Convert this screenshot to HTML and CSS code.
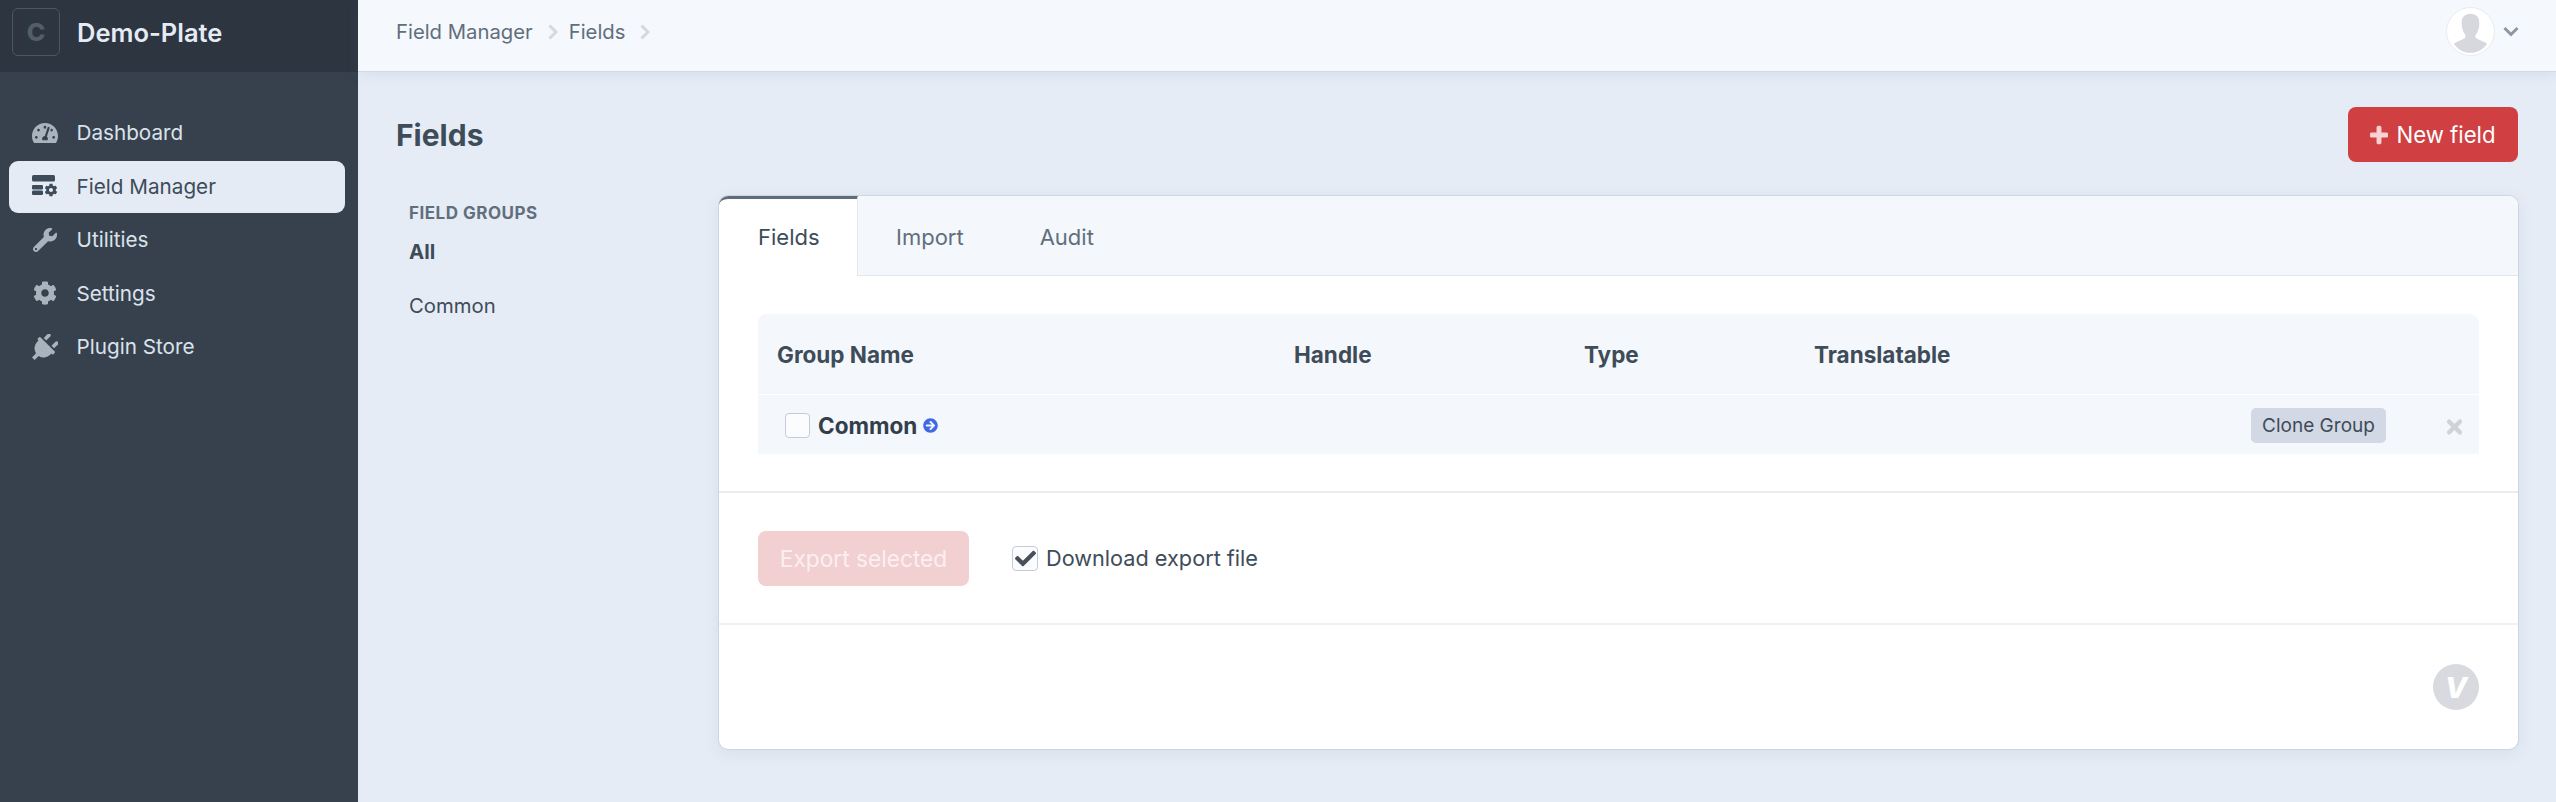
FILE: index.html
```html
<!DOCTYPE html>
<html lang="en">
<head>
    <meta charset="UTF-8">
    <title>Fields</title>
    <link rel="stylesheet" href="styles.css">
</head>
<body>
    <div class="app">
        <aside class="sidebar">
            <div class="brand">
                <span class="brand-logo">C</span>
                <span class="brand-name">Demo-Plate</span>
            </div>
            <ul class="nav">
                <li class="nav-item">
                    <svg class="nav-icon" viewBox="0 0 576 512"><path d="M288 32C128.94 32 0 160.94 0 320c0 52.8 14.25 102.26 39.06 144.8 5.61 9.62 16.3 15.2 27.44 15.2h443c11.14 0 21.83-5.58 27.44-15.2C561.75 422.26 576 372.8 576 320c0-159.06-128.94-288-288-288zm0 64c14.71 0 26.58 10.13 30.32 23.65-1.11 2.26-2.64 4.23-3.45 6.67l-9.22 27.67c-5.13 3.49-10.97 6.01-17.64 6.01-17.67 0-32-14.33-32-32S270.33 96 288 96zM96 384c-17.67 0-32-14.33-32-32s14.33-32 32-32 32 14.33 32 32-14.33 32-32 32zm48-160c-17.67 0-32-14.33-32-32s14.33-32 32-32 32 14.33 32 32-14.33 32-32 32zm246.77-72.41l-61.33 184C343.13 347.33 352 364.54 352 384c0 11.72-3.38 22.55-8.88 32H232.88c-5.5-9.45-8.88-20.28-8.88-32 0-33.94 26.5-61.43 59.9-63.59l61.34-184.01c4.17-12.56 17.73-19.45 30.36-15.17 12.57 4.19 19.35 17.79 15.17 30.36zm14.66 57.2l15.52-46.55c3.47-1.29 7.13-2.23 11.05-2.23 17.67 0 32 14.33 32 32s-14.33 32-32 32c-11.38-.01-20.89-6.28-26.57-15.22zM480 384c-17.67 0-32-14.33-32-32s14.33-32 32-32 32 14.33 32 32-14.33 32-32 32z"/></svg>
                    Dashboard
                </li>
                <li class="nav-item active">
                    <svg class="nav-icon" viewBox="0 0 26 24">
                        <rect x="0" y="0" width="23" height="6.500" rx="1.500"/>
                        <rect x="0" y="10" width="11" height="4.500" rx="1.200"/>
                        <rect x="0" y="15.500" width="11" height="4.500" rx="1.200"/>
                        <g transform="translate(12.500 8.500) scale(0.0254)"><path d="M487.4 315.7l-42.6-24.6c4.3-23.2 4.3-47 0-70.2l42.6-24.6c4.9-2.8 7.1-8.6 5.5-14-11.1-35.6-30-67.8-54.7-94.6-3.8-4.1-10-5.1-14.8-2.3L380.8 110c-17.9-15.4-38.5-27.3-60.8-35.1V25.8c0-5.6-3.9-10.5-9.4-11.7-36.7-8.2-74.3-7.8-109.2 0-5.5 1.2-9.4 6.1-9.4 11.7V75c-22.2 7.9-42.8 19.8-60.8 35.1L88.7 85.5c-4.9-2.8-11-1.9-14.8 2.3-24.7 26.7-43.6 58.9-54.7 94.6-1.7 5.4.6 11.2 5.5 14L67.3 221c-4.3 23.2-4.3 47 0 70.2l-42.6 24.6c-4.9 2.8-7.1 8.6-5.5 14 11.1 35.6 30 67.8 54.7 94.6 3.8 4.1 10 5.1 14.8 2.3l42.6-24.6c17.9 15.4 38.5 27.3 60.8 35.1v49.2c0 5.6 3.9 10.5 9.4 11.7 36.7 8.2 74.3 7.8 109.2 0 5.5-1.2 9.4-6.1 9.4-11.7v-49.2c22.2-7.9 42.8-19.8 60.8-35.1l42.6 24.6c4.9 2.8 11 1.9 14.8-2.3 24.7-26.7 43.6-58.9 54.7-94.6 1.5-5.5-.7-11.3-5.6-14.1zM256 336c-44.1 0-80-35.9-80-80s35.9-80 80-80 80 35.9 80 80-35.9 80-80 80z"/></g>
                    </svg>
                    Field Manager
                </li>
                <li class="nav-item">
                    <svg class="nav-icon" viewBox="0 0 512 512"><path d="M507.73 109.1c-2.24-9.03-13.54-12.09-20.12-5.51l-74.36 74.36-67.88-11.31-11.31-67.88 74.36-74.36c6.62-6.62 3.43-17.9-5.66-20.16-47.38-11.74-99.55.91-136.58 37.93-39.64 39.64-50.55 97.1-34.05 147.2L18.74 402.76c-24.99 24.99-24.99 65.51 0 90.5 24.99 24.99 65.51 24.99 90.5 0l213.21-213.21c50.12 16.71 107.47 5.68 147.37-34.22 37.07-37.07 49.7-89.32 37.91-136.73zM64 472c-13.25 0-24-10.75-24-24 0-13.26 10.75-24 24-24s24 10.74 24 24c0 13.25-10.75 24-24 24z"/></svg>
                    Utilities
                </li>
                <li class="nav-item">
                    <svg class="nav-icon" viewBox="0 0 512 512"><path d="M487.4 315.7l-42.6-24.6c4.3-23.2 4.3-47 0-70.2l42.6-24.6c4.9-2.8 7.1-8.6 5.5-14-11.1-35.6-30-67.8-54.7-94.6-3.8-4.1-10-5.1-14.8-2.3L380.8 110c-17.9-15.4-38.5-27.3-60.8-35.1V25.8c0-5.6-3.9-10.5-9.4-11.7-36.7-8.2-74.3-7.8-109.2 0-5.5 1.2-9.4 6.1-9.4 11.7V75c-22.2 7.9-42.8 19.8-60.8 35.1L88.7 85.5c-4.9-2.8-11-1.9-14.8 2.3-24.7 26.7-43.6 58.9-54.7 94.6-1.7 5.4.6 11.2 5.5 14L67.3 221c-4.3 23.2-4.3 47 0 70.2l-42.6 24.6c-4.9 2.8-7.1 8.6-5.5 14 11.1 35.6 30 67.8 54.7 94.6 3.8 4.1 10 5.1 14.8 2.3l42.6-24.6c17.9 15.4 38.5 27.3 60.8 35.1v49.2c0 5.6 3.9 10.5 9.4 11.7 36.7 8.2 74.3 7.8 109.2 0 5.5-1.2 9.4-6.1 9.4-11.7v-49.2c22.2-7.9 42.8-19.8 60.8-35.1l42.6 24.6c4.9 2.8 11 1.9 14.8-2.3 24.7-26.7 43.6-58.9 54.7-94.6 1.5-5.5-.7-11.3-5.6-14.1zM256 336c-44.1 0-80-35.9-80-80s35.9-80 80-80 80 35.9 80 80-35.9 80-80 80z"/></svg>
                    Settings
                </li>
                <li class="nav-item">
                    <svg class="nav-icon plug" viewBox="52 7 453 453"><g transform="rotate(45 256 256) translate(64 0)"><path d="M320,32a32,32,0,0,0-64,0v96h64Zm48,128H16A16,16,0,0,0,0,176v32a16,16,0,0,0,16,16H32v32A160.07,160.07,0,0,0,160,412.8V512h64V412.8A160.07,160.07,0,0,0,352,256V224h16a16,16,0,0,0,16-16V176A16,16,0,0,0,368,160ZM128,32a32,32,0,0,0-64,0v96h64Z"/></g></svg>
                    Plugin Store
                </li>
            </ul>
        </aside>

        <div class="page">
            <header class="topbar">
                <div class="crumbs">
                    <span>Field Manager</span>
                    <svg class="crumb-sep" viewBox="0 0 10 16"><path d="M1.500 1.500 8 8l-6.500 6.500"/></svg>
                    <span>Fields</span>
                    <svg class="crumb-sep" viewBox="0 0 10 16"><path d="M1.500 1.500 8 8l-6.500 6.500"/></svg>
                </div>
                <div class="account">
                    <svg class="avatar" viewBox="0 0 50 50">
                        <circle cx="25" cy="25" r="24.500" fill="#fff" stroke="#e6e9ef"/>
                        <path d="M25 7c-6 0-9 3.500-9 9.500 0 5 1.500 9 3.500 11.500.8 1 .8 3-.5 4-3 2-7 3-11 5.500 3.800 5.700 10 9.300 17 9.300s13.200-3.600 17-9.300c-4-2.500-8-3.500-11-5.500-1.300-1-1.300-3-.5-4 2-2.500 3.500-6.500 3.500-11.500C34 10.500 31 7 25 7z" fill="#d6d8de"/>
                    </svg>
                    <svg class="caret" viewBox="0 0 16 11"><path d="M1.500 2 8 8.500 14.500 2"/></svg>
                </div>
            </header>

            <main class="content">
                <div class="title-row">
                    <h1 class="title">Fields</h1>
                    <button class="btn-new">
                        <svg class="plus" viewBox="0 0 448 512"><path d="M416 208H272V64c0-17.670-14.330-32-32-32h-32c-17.670 0-32 14.330-32 32v144H32c-17.670 0-32 14.330-32 32v32c0 17.670 14.330 32 32 32h144v144c0 17.670 14.330 32 32 32h32c17.670 0 32-14.330 32-32V304h144c17.670 0 32-14.330 32-32v-32c0-17.670-14.330-32-32-32z"/></svg>
                        New field
                    </button>
                </div>

                <div class="columns">
                    <div class="groups">
                        <div class="groups-title">FIELD GROUPS</div>
                        <div class="group current">All</div>
                        <div class="group">Common</div>
                    </div>

                    <div class="card">
                        <div class="tabs">
                            <div class="tab selected">Fields</div>
                            <div class="tab">Import</div>
                            <div class="tab">Audit</div>
                        </div>

                        <div class="table-wrap">
                            <div class="table">
                                <div class="row head">
                                    <div>Group Name</div>
                                    <div>Handle</div>
                                    <div>Type</div>
                                    <div>Translatable</div>
                                </div>
                                <div class="row-group">
                                    <div class="group-name">
                                        <span class="check"></span>
                                        <span>Common</span>
                                        <svg class="go" viewBox="0 0 512 512"><path d="M256 8c137 0 248 111 248 248S393 504 256 504 8 393 8 256 119 8 256 8zm-28.900 143.600l75.500 72.400H120c-13.300 0-24 10.700-24 24v16c0 13.300 10.700 24 24 24h182.600l-75.500 72.400c-9.700 9.300-9.900 24.800-.4 34.300l11 10.900c9.400 9.400 24.600 9.400 33.900 0L404.300 273c9.400-9.400 9.400-24.600 0-33.900L271.600 106.300c-9.400-9.400-24.600-9.400-33.900 0l-11 10.900c-9.500 9.600-9.300 25.100.4 34.400z"/></svg>
                                    </div>
                                    <div class="group-actions">
                                        <span class="btn-clone">Clone Group</span>
                                        <svg class="remove" viewBox="0 0 352 512"><path d="M242.720 256l100.070-100.070c12.280-12.280 12.280-32.190 0-44.480l-22.240-22.240c-12.280-12.280-32.190-12.280-44.480 0L176 189.280 75.930 89.210c-12.280-12.280-32.190-12.280-44.480 0L9.210 111.450c-12.280 12.280-12.280 32.190 0 44.480L109.280 256 9.210 356.070c-12.280 12.280-12.280 32.190 0 44.480l22.240 22.240c12.280 12.280 32.200 12.280 44.480 0L176 322.720l100.070 100.070c12.280 12.280 32.200 12.280 44.480 0l22.240-22.240c12.280-12.280 12.280-32.190 0-44.480L242.720 256z"/></svg>
                                    </div>
                                </div>
                            </div>
                        </div>

                        <div class="export">
                            <span class="btn-export">Export selected</span>
                            <label class="download">
                                <span class="check checked">
                                    <svg viewBox="0 0 512 512"><path d="M173.898 439.404l-166.400-166.400c-9.997-9.997-9.997-26.206 0-36.204l36.203-36.204c9.997-9.998 26.207-9.998 36.204 0L192 312.690 432.095 72.596c9.997-9.997 26.207-9.997 36.204 0l36.203 36.204c9.997 9.997 9.997 26.206 0 36.204l-294.400 294.401c-9.998 9.997-26.207 9.997-36.204-.001z"/></svg>
                                </span>
                                Download export file
                            </label>
                        </div>

                        <div class="card-foot">
                            <span class="v-logo">V</span>
                        </div>
                    </div>
                </div>
            </main>
        </div>
    </div>
</body>
</html>
```

FILE: styles.css
```css
*{
    margin: 0;
    padding: 0;
    box-sizing: border-box;
}
ul{
    list-style: none;
}
html, body{
    height: 100%;
    overflow: hidden;
}
body{
    font-family: Inter, "Liberation Sans", sans-serif;
    font-size: 22px;
    color: #3e4c59;
    background: #e5ecf6;
}
.app{
    display: flex;
    height: 100%;
}

/* sidebar */
.sidebar{
    width: 358px;
    flex-shrink: 0;
    background: #37414d;
}
.brand{
    height: 72px;
    padding: 0 0 8px 12px;
    display: flex;
    align-items: center;
    background: #2d3540;
}
.brand-logo{
    width: 48px;
    height: 48px;
    border: 1px solid #4b5663;
    border-radius: 6px;
    margin-right: 17px;
    display: flex;
    align-items: center;
    justify-content: center;
    color: #535e6b;
    font-size: 25px;
    font-weight: 800;
}
.brand-name{
    color: #e5ebf5;
    font-size: 25.500px;
    font-weight: 600;
}
.nav{
    padding: 34px 13px 0 9px;
}
.nav-item{
    height: 53.500px;
    display: flex;
    align-items: center;
    padding-left: 23px;
    border-radius: 9px;
    color: #dbe2ec;
    font-size: 20.700px;
}
.nav-item.active{
    height: 52px;
    margin: 1px 0 0.500px;
    background: #e5ebf5;
    color: #3e4c59;
}
.nav-icon{
    width: 26px;
    height: 24px;
    margin-right: 18.500px;
    fill: #a9b3bd;
}
.nav-icon.plug{
    height: 26px;
}
.active .nav-icon{
    fill: #3e4c59;
}

/* top bar */
.page{
    flex: 1;
    min-width: 0;
}
.topbar{
    height: 72px;
    padding: 0 37px 8px 38px;
    display: flex;
    align-items: center;
    justify-content: space-between;
    background: #f5f8fc;
    border-bottom: 1px solid #d3dae5;
    box-shadow: 0 2px 12px rgba(100, 120, 150, 0.12);
}
.crumbs{
    display: flex;
    align-items: center;
    color: #616e7c;
    font-size: 20.300px;
}
.crumb-sep{
    width: 10px;
    height: 16px;
    margin: 0 11px 0 15px;
    fill: none;
    stroke: #d5d9de;
    stroke-width: 3;
}
.account{
    display: flex;
    align-items: center;
}
.avatar{
    width: 49px;
    height: 49px;
}
.caret{
    width: 16px;
    height: 11px;
    margin-left: 8px;
    fill: none;
    stroke: #8a97a5;
    stroke-width: 3;
}

/* content */
.content{
    padding: 35px 38px 0;
}
.title-row{
    height: 55px;
    display: flex;
    align-items: center;
    justify-content: space-between;
}
.title{
    font-size: 30px;
    font-weight: 700;
    color: #3e4c59;
}
.btn-new{
    width: 170px;
    height: 55px;
    border: 0;
    border-radius: 8px;
    display: flex;
    align-items: center;
    justify-content: center;
    background: #d04043;
    color: #fff;
    font-family: inherit;
    font-size: 22.200px;
}
.plus{
    width: 18px;
    height: 20px;
    margin-right: 8px;
    fill: #f8d3d4;
    stroke: #f8d3d4;
    stroke-width: 30;
}
.columns{
    margin-top: 34px;
    display: flex;
    align-items: flex-start;
}
.groups{
    width: 323px;
    flex-shrink: 0;
    padding: 7px 0 0 13px;
}
.groups-title{
    color: #616e7c;
    font-size: 17px;
    font-weight: 700;
    letter-spacing: 0.500px;
}
.group{
    color: #3e4c59;
    font-size: 20.300px;
}
.group.current{
    margin-top: 16px;
    font-weight: 700;
}
.group + .group{
    margin-top: 29px;
}

/* card */
.card{
    flex: 1;
    min-width: 0;
    height: 553px;
    border-radius: 9px;
    background: #fff;
    box-shadow: 0 0 0 1px #cdd5e1, 0 4px 16px rgba(100, 120, 150, 0.12);
}
.tabs{
    height: 80px;
    display: flex;
    background: #f4f7fb;
    border-bottom: 1px solid #e3e7ee;
    border-radius: 9px 9px 0 0;
}
.tab{
    height: 80px;
    padding: 0 38px 2px;
    display: flex;
    align-items: center;
    color: #616e7c;
    border-top: 3px solid transparent;
}
.tab.selected{
    width: 139px;
    padding-left: 39px;
    background: #fff;
    color: #3e4c59;
    border-top: 3px solid #5f6c7b;
    border-right: 1px solid #e3e7ee;
    border-radius: 9px 0 0 0;
}
.table-wrap{
    padding: 38px 39px 37px;
    border-bottom: 2px solid #e9edf2;
}
.table{
    background: #f4f7fb;
    border-radius: 9px 9px 0 0;
}
.row{
    height: 81px;
    padding: 1px 0 0 19px;
    display: grid;
    grid-template-columns: 517px 290px 230px 1fr;
    align-items: center;
    font-size: 22.500px;
    font-weight: 700;
    border-bottom: 1px solid #fff;
}
.row-group{
    height: 59px;
    padding: 1px 17px 0 27px;
    display: flex;
    align-items: center;
    justify-content: space-between;
}
.group-name{
    display: flex;
    align-items: center;
    font-size: 22.500px;
    font-weight: 700;
    color: #323f4b;
}
.check{
    width: 25px;
    height: 25px;
    margin-right: 8px;
    display: flex;
    align-items: center;
    justify-content: center;
    flex-shrink: 0;
    background: #fbfcfe;
    border: 1px solid #c5ccd8;
    border-radius: 4px;
}
.check.checked{
    width: 26px;
    margin-right: 8px;
}
.check svg{
    width: 21px;
    height: 21px;
    fill: #474f59;
}
.go{
    width: 15px;
    height: 15px;
    margin-left: 6px;
    fill: #4069e5;
}
.group-actions{
    display: flex;
    align-items: center;
}
.btn-clone{
    width: 135px;
    height: 35px;
    margin-right: 61px;
    display: flex;
    align-items: center;
    justify-content: center;
    border-radius: 5px;
    background: #d2d8e4;
    font-size: 19px;
}
.remove{
    width: 15px;
    height: 22px;
    margin-top: 3px;
    fill: #cfd2d7;
    stroke: #cfd2d7;
    stroke-width: 14;
}

/* export */
.export{
    height: 132px;
    padding: 0 39px;
    display: flex;
    align-items: center;
    border-bottom: 2px solid #eef1f5;
}
.btn-export{
    width: 211px;
    height: 55px;
    margin-right: 43px;
    display: flex;
    align-items: center;
    justify-content: center;
    border-radius: 8px;
    background: #f2cfd0;
    color: #fbf0f0;
    font-size: 22.700px;
}
.download{
    display: flex;
    align-items: center;
    color: #3e4c59;
    font-size: 21.700px;
}
.card-foot{
    padding: 39px 39px 0;
    display: flex;
    justify-content: flex-end;
}
.v-logo{
    width: 46px;
    height: 46px;
    border-radius: 50%;
    display: flex;
    align-items: center;
    justify-content: center;
    background: #d8dadf;
    color: #fff;
    font-size: 29px;
    font-weight: 800;
    font-style: italic;
}
```
